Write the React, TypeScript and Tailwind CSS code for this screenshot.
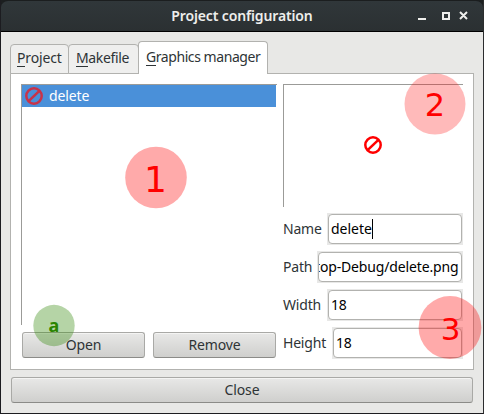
import type { ReactNode } from "react";

function NoEntry({ className }: { className: string }) {
  return (
    <svg viewBox="0 0 18 18" className={"h-[18px] w-[18px] shrink-0 " + className} fill="none" stroke="currentColor" strokeWidth="2.5">
      <circle cx="9" cy="9" r="7.7" />
      <path d="M3.6 14.2 14.4 3.8" />
    </svg>
  );
}

function Tab({ letter, rest, className }: { letter: string; rest: string; className: string }) {
  return (
    <div className={"flex rounded-t-[4px] border-x border-t border-[#b2b2af] leading-5 whitespace-nowrap " + className}>
      <span className="h-[19px] border-b border-[#2e3436]">{letter}</span>
      <span>{rest}</span>
    </div>
  );
}

function Button({ children, className }: { children: ReactNode; className: string }) {
  return (
    <button
      className={
        "flex h-[26px] items-center justify-center rounded-[3px] border border-[#a9a9a6] border-b-[#8b8b88] bg-linear-to-b from-[#e8e8e7] to-[#cfcfcd] pb-px leading-5 tracking-[-0.15px] shadow-[inset_0_1px_0_#f4f4f3] " +
        className
      }
    >
      {children}
    </button>
  );
}

function Field({ label, children, className }: { label: string; children: ReactNode; className: string }) {
  return (
    <div className="flex h-8 items-center justify-between">
      <span className="leading-5 tracking-[-0.2px]">{label}</span>
      <div className={"h-8 bg-[#e8e8e7] p-px " + className}>
        <div className="flex h-[30px] items-center overflow-hidden rounded-[4px] border border-[#b2b2af] bg-white pb-px leading-5 text-black">
          {children}
        </div>
      </div>
    </div>
  );
}

export default function App() {
  return (
    <div className="relative flex h-[414px] w-[484px] flex-col overflow-hidden border-x border-b border-[#1c1c20] border-r-[#2b2d2e] bg-[#e8e8e6] font-['Noto_Sans','Open_Sans',sans-serif] text-[14px] text-[#2e3436]">
      <header className="h-8 shrink-0 bg-[#1c1f20]">
        <div className="relative flex h-8 items-center justify-center rounded-t-[7px] border-t border-b border-t-[#1b1e1f] border-b-black bg-linear-to-b from-[#30373a] to-[#2b3032]">
          <span className="text-[14px] leading-5 font-semibold tracking-[-0.14px] text-[#eeeeec]">Project configuration</span>
          <svg className="absolute top-[9px] left-[416px] h-3 w-[52px]" viewBox="0 0 52 12" fill="none" stroke="#eeeeec" strokeWidth="2">
            <path d="M1 9h8M26 3h6v6h-6zM50 2l-7 7M43 2l7 7" />
          </svg>
        </div>
      </header>

      <nav className="z-10 ml-[9px] flex h-[42px] shrink-0 items-end">
        <Tab letter="P" rest="roject" className="h-[30px] w-[59px] border-b bg-[#efefee] pt-[3px] pl-[6px] tracking-[-0.15px]" />
        <Tab letter="M" rest="akefile" className="-ml-px h-[30px] w-[71px] border-b bg-[#efefee] pt-[3px] pl-[7px] tracking-[-0.35px]" />
        <Tab letter="G" rest="raphics manager" className="-ml-px h-[33px] w-[130px] bg-white pt-[5px] pl-[7px] tracking-[-0.43px]" />
      </nav>

      <main className="-mt-px ml-[9px] flex h-[297px] w-[464px] shrink-0 border border-[#b2b2af] bg-white pt-[10px] pl-[10px]">
        <section className="w-[256px]">
          <div className="h-[241px] border-t border-l border-[#9b9b98]">
            <div className="flex h-[22px] w-[254px] items-center bg-[#4a90d9] pl-[3px] text-white">
              <NoEntry className="text-[#c83349]" />
              <span className="pl-[6px] leading-5 tracking-[-0.1px]">delete</span>
            </div>
          </div>
          <div className="mt-[7px] flex gap-2 pl-px">
            <Button className="w-[123px]">Open</Button>
            <Button className="w-[123px]">Remove</Button>
          </div>
        </section>
        <section className="ml-[6px] w-[180px]">
          <div className="flex h-[123px] items-center justify-center border-t border-l border-[#9b9b98] pr-[2px] pb-[2px]">
            <NoEntry className="text-[#ff0000]" />
          </div>
          <div className="mt-[6px] flex flex-col gap-[6px]">
            <Field label="Name" className="w-[136px]">
              <span className="pl-[2px]">delete</span>
              <i className="h-5 w-px bg-black" />
            </Field>
            <Field label="Path" className="w-[146px]">
              <span className="-ml-[4px] tracking-[-0.15px] whitespace-nowrap">top-Debug/delete.png</span>
            </Field>
            <Field label="Width" className="w-[136px]">
              <span className="pl-[2px] tracking-[-0.2px]">18</span>
            </Field>
            <Field label="Height" className="w-[131px]">
              <span className="pl-[2px] tracking-[-0.2px]">18</span>
            </Field>
          </div>
        </section>
      </main>

      <Button className="mt-[7px] ml-[10px] w-[462px] shrink-0">Close</Button>

      <svg className="pointer-events-none absolute top-0 -left-px z-20 h-[414px] w-[484px]" viewBox="0 0 484 414" fontFamily="DejaVu Sans, sans-serif" textAnchor="middle">
        <circle cx="156" cy="177.5" r="30.8" fill="#f00" fillOpacity=".335" />
        <circle cx="435" cy="104" r="30.5" fill="#f00" fillOpacity=".27" />
        <circle cx="450" cy="327.5" r="31.4" fill="#f00" fillOpacity=".335" />
        <circle cx="54" cy="325.5" r="20.7" fill="#2a8500" fillOpacity=".35" />
        <g fill="#f00">
          <text x="155.5" y="192" fontSize="36">1</text>
          <text x="435" y="116" fontSize="32">2</text>
          <text x="450.5" y="339.5" fontSize="31">3</text>
        </g>
        <text x="54" y="332" fontSize="18" fontWeight="700" fontFamily="Noto Sans, sans-serif" fill="#2a8500">a</text>
      </svg>
    </div>
  );
}
